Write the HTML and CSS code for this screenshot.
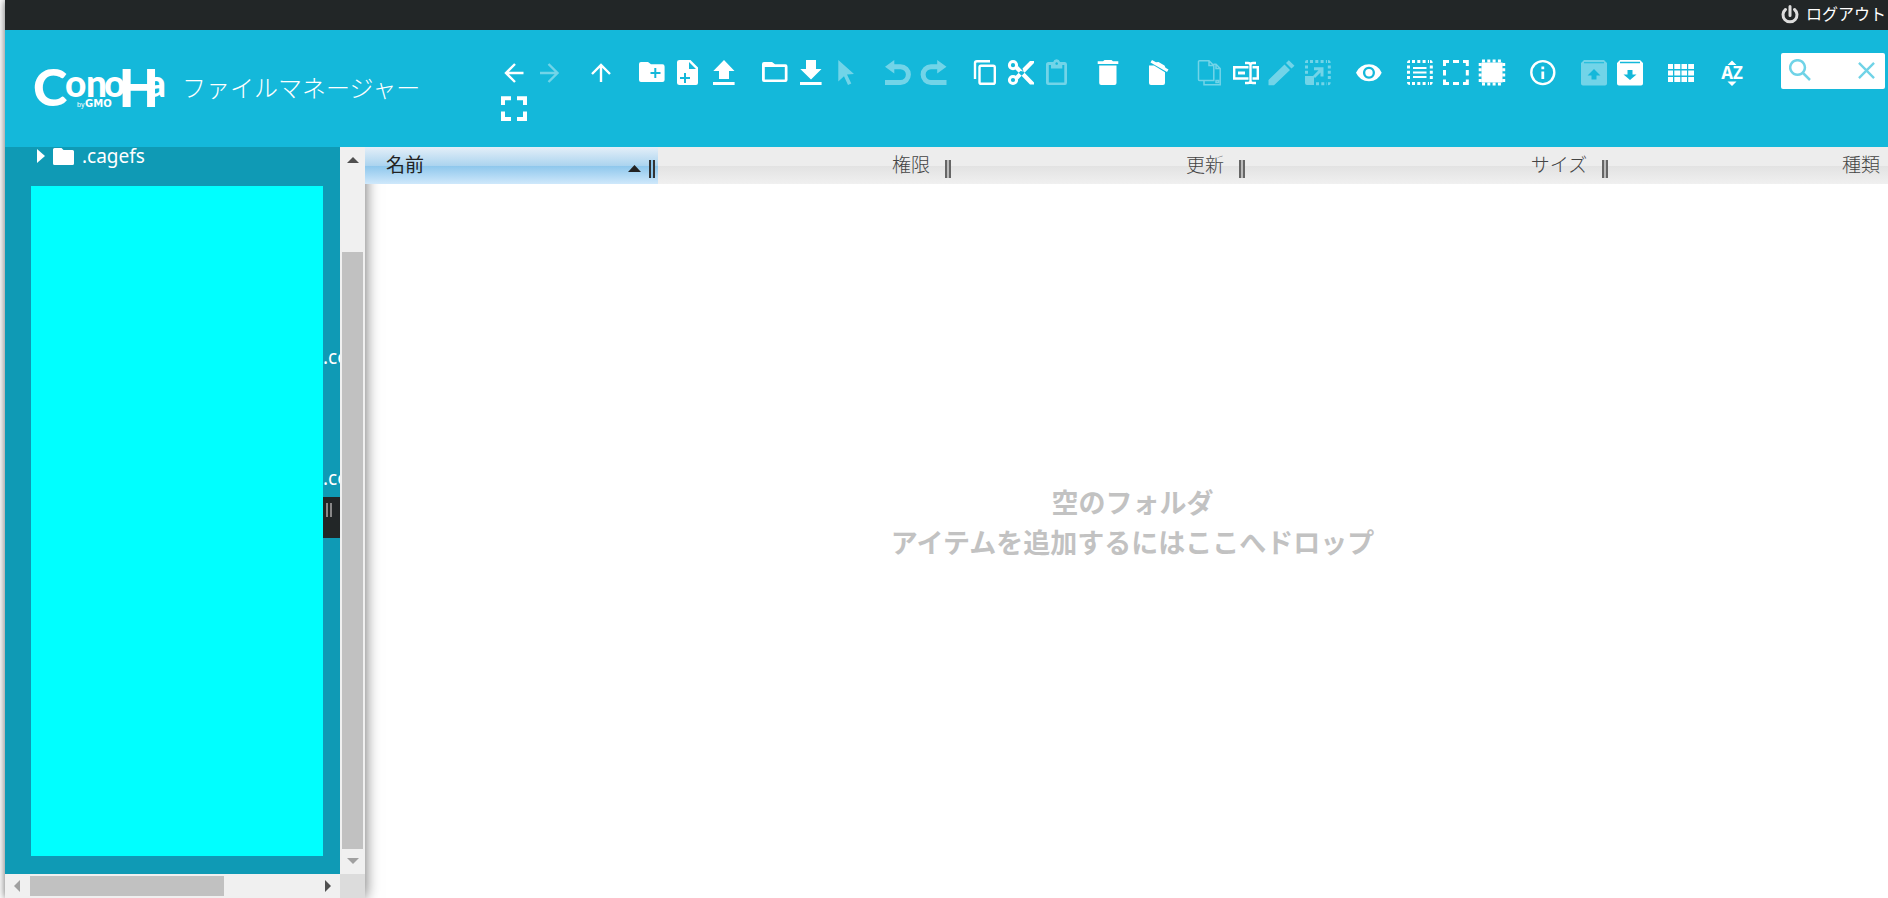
FILE: index.html
```
<!DOCTYPE html>
<html lang="ja">
<head>
<meta charset="utf-8">
<title>ConoHa ファイルマネージャー</title>
<link rel="stylesheet" href="styles.css">
</head>
<body>
<div class="app">
  <div class="topbar">
    <a class="logout" href="#logout">
      <svg class="power" viewBox="0 0 20 20" aria-hidden="true"><path d="M5.5 4.5a7 7 0 1 0 9 0M10 1.500v9"/></svg>
      <span>ログアウト</span>
    </a>
  </div>

  <header class="header">
    <h1 class="brand">
      <svg class="logo" viewBox="0 0 134 42" role="img" aria-label="ConoHa by GMO">
        <text y="38"><tspan class="logo-c" x="-2">C</tspan><tspan class="logo-s" y="29" x="30 51 69">ono</tspan><tspan class="logo-h" y="39" x="84">H</tspan><tspan class="logo-s" y="29" x="112">a</tspan></text>
        <text y="39"><tspan class="logo-by" x="42">by</tspan><tspan class="logo-gmo" x="50">GMO</tspan></text>
      </svg>
      <span class="brand-name">ファイルマネージャー</span>
    </h1>

    <div class="toolbar" role="toolbar" aria-label="ツールバー">
      <div class="group">
        <button class="tool" aria-label="戻る"><svg viewBox="0 0 26 26"><path class="l" d="M22.500 13H5M14 4L5 13L14 22"/></svg></button>
        <button class="tool" disabled aria-label="進む"><svg viewBox="0 0 26 26"><path class="l" d="M3 13H20.500M11.500 4L20.500 13L11.500 22"/></svg></button>
      </div>
      <div class="group">
        <button class="tool" aria-label="上へ"><svg viewBox="0 0 26 26"><path class="l" d="M13 22V5M4 14L13 5L22 14"/></svg></button>
      </div>
      <div class="group">
        <button class="tool" aria-label="新規フォルダ"><svg viewBox="0 0 26 26"><path fill-rule="evenodd" d="M2 2H9L12 4.200H23.500Q25.600 4.200 25.600 6.500V20Q25.600 22 23.500 22H2Q0 22 0 20V4Q0 2 2 2ZM15.300 8V12H11.500V14H15.300V18H17.300V14H21.500V12H17.300V8Z"/></svg></button>
        <button class="tool" aria-label="新規ファイル"><svg viewBox="0 0 26 26"><path fill-rule="evenodd" d="M4.500 0H15.500L23 7.500V23Q23 25 21 25H4.500Q2 25 2 23V2Q2 0 4.500 0ZM14 2V9H21ZM9 13V17H5V19H9V23H11V19H15V17H11V13Z"/></svg></button>
        <button class="tool" aria-label="アップロード"><svg viewBox="0 0 26 26"><path d="M13 0L23.500 11H18V19H8V11H2.300ZM2 22H23.600V25H2Z"/></svg></button>
      </div>
      <div class="group">
        <button class="tool" aria-label="開く"><svg viewBox="0 0 26 26"><path fill-rule="evenodd" d="M2 2H10L13 4.200H23.500Q25.500 4.200 25.500 6.500V20Q25.500 22 23.500 22H2Q0 22 0 20V4Q0 2 2 2ZM2.800 7V19.500H22.800V7Z"/></svg></button>
        <button class="tool" aria-label="ダウンロード"><svg viewBox="0 0 26 26"><path d="M8 0H18V9H23.500L13 19.500L2.300 9H8ZM2 22H23.600V25H2Z"/></svg></button>
        <button class="tool" disabled aria-label="選択項目を開く"><svg viewBox="0 0 26 26"><path d="M4.300 0L20 14L13 14.500L17.300 23.500L14 25L10 16.300L4.300 21.500Z"/></svg></button>
      </div>
      <div class="group">
        <button class="tool" disabled aria-label="元に戻す"><svg viewBox="0 0 26 26"><path d="M0 6.700L9.300 0V4.200H15.500a10.400 10.400 0 0 1 0 20.800H0V20H15.500a5.400 5.400 0 0 0 0-10.800H9.300V13.400Z"/></svg></button>
        <button class="tool" disabled aria-label="やり直し"><svg viewBox="0 0 26 26"><path d="M25.500 6.700L16.200 0V4.200H10a10.400 10.400 0 0 0 0 20.800H25.500V20H10a5.400 5.400 0 0 1 0-10.800H16.200V13.400Z"/></svg></button>
      </div>
      <div class="group">
        <button class="tool" aria-label="コピー"><svg viewBox="0 0 26 26"><path class="l" d="M3 19V3Q3 1.200 5 1.200H18M9 5.700H21.200Q22.800 5.700 22.800 7.500V22.200Q22.800 23.800 21.200 23.800H9Q7.500 23.800 7.500 22.200V7.500Q7.500 5.700 9 5.700Z"/></svg></button>
        <button class="tool" aria-label="切り取り"><svg viewBox="0 0 26 26"><circle class="l3" cx="5" cy="5.200" r="3.600"/><circle class="l3" cx="5" cy="20" r="3.600"/><path d="M7 9L10 6L26 22.500V24.500H22ZM7 16.500L10 19.500L26 3V1H22L14.500 8.500L15.500 11.500L12.500 11Z"/></svg></button>
        <button class="tool" disabled aria-label="貼り付け"><svg viewBox="0 0 26 26"><path fill-rule="evenodd" d="M4.500 2H9.200A3.500 3.500 0 0 1 16 2H21Q23 2 23 4.500V22.500Q23 25 21 25H4.500Q2 25 2 22.500V4.500Q2 2 4.500 2ZM4.800 5V22.500H20.300V5H18.300V8.500H7V5ZM12.600 2.200a1.300 1.300 0 1 0 .1 0Z"/></svg></button>
      </div>
      <div class="group">
        <button class="tool" aria-label="削除"><svg viewBox="0 0 26 26"><path d="M2.700 1.200H8L9.500 0H16.500L18 1.200H23.300V4H2.700ZM4.200 5.500H21.500V23Q21.500 25 19.500 25H6.200Q4.200 25 4.200 23Z"/></svg></button>
      </div>
      <div class="group">
        <button class="tool" aria-label="フォルダを空にする"><svg viewBox="0 0 26 26"><path d="M3 5.500H8L19 12.200V23Q19 25 17 25H5Q3 25 3 23ZM6 0L10 2.200L12.500 2L18.500 5.500L19.500 7.700L22.500 9.500L21 12L4.500 2.500Z"/></svg></button>
      </div>
      <div class="group">
        <button class="tool" disabled aria-label="複製"><svg viewBox="0 0 26 26"><path class="t" d="M2.500 .8H12L16.800 5.500V20.500H2.500Q1.500 20.500 1.500 19.500V1.800Q1.500 .8 2.500 .8ZM12 .8V5.500H16.800M7 20.500V24.700H23.200V8.500L19 4.200H16.500M19 4.200V8.500H23.200M19 20.500H21.500V22.500H19Z"/></svg></button>
        <button class="tool" aria-label="名前変更"><svg viewBox="0 0 26 26"><path class="l" d="M15.500 7.300H1.200V18.500H15.500M19.500 7.300H24.800V18.500H19.500M17.500 4V22M12 3H15Q17.500 3 17.500 5Q17.500 3 20 3H23M12 23H15Q17.500 23 17.500 21Q17.500 23 20 23H23"/><path d="M5 11.500H12V14.500H5Z"/></svg></button>
        <button class="tool" disabled aria-label="編集"><svg viewBox="0 0 26 26"><path d="M-.5 20L15.500 4.500L21 10L5 25.300H-.5ZM17 3L19.800 .3L25.500 5.700L22.500 8.500Z"/></svg></button>
        <button class="tool" disabled aria-label="サイズ変更"><svg viewBox="0 0 26 26"><path class="d" d="M5 1.500H22M1.500 5.500V15M24.300 5.500V20.500M11 23.700H22"/><path d="M0 2Q0 0 2 0H3V3H0ZM23 0Q25.700 0 25.700 3H23ZM23 22.200H25.700Q25.700 25.200 23 25.200ZM0 16H9V25H2Q0 25 0 23ZM9 7.200H18.500V16.500H15.500V12.500L10 18L8 16L13.500 10.200H9Z"/></svg></button>
      </div>
      <div class="group">
        <button class="tool" aria-label="プレビュー"><svg viewBox="0 0 26 26"><path fill-rule="evenodd" d="M13 4.200Q22 4.200 25.700 12.700Q22 21.200 13 21.200Q4 21.200 0 12.700Q4 4.200 13 4.200ZM12.900 6.700a6 6 0 1 0 .1 0Z"/><circle cx="13" cy="12.700" r="3.700"/></svg></button>
      </div>
      <div class="group">
        <button class="tool" aria-label="すべて選択"><svg viewBox="0 0 26 26"><path class="d" d="M5 1.500H22M5 23.500H22M1.500 5.500V20.500M24.300 5.500V20.500"/><path d="M0 3Q0 0 3 0V3ZM23 0Q25.700 0 25.700 3H23ZM0 22H3V25Q0 25 0 22ZM23 22H25.700Q25.700 25 23 25ZM6 7H19.500V9H6ZM6 11.500H19.500V13.500H6ZM6 16H19.500V18H6Z"/></svg></button>
        <button class="tool" aria-label="選択解除"><svg viewBox="0 0 26 26"><path class="l3" d="M1.500 6V1.500H6M10 1.500H16M20 1.500H24.300V6M24.300 10V15.500M24.300 19.500V23.500H20M16 23.500H10M6 23.500H1.500V19.500M1.500 15.500V10"/></svg></button>
        <button class="tool" aria-label="選択を反転"><svg viewBox="0 0 26 26"><path d="M2.500 2.500H23.500V22.500H2.500Z"/><path class="d" d="M3 1H24M3 24H24M1.200 3V24M24.700 3V24"/></svg></button>
      </div>
      <div class="group">
        <button class="tool" aria-label="情報"><svg viewBox="0 0 26 26"><circle class="l" cx="12.800" cy="12.600" r="11.500"/><path d="M11.400 6.500H14.200V9.200H11.400ZM11.400 11.500H14.200V19H11.400Z"/></svg></button>
      </div>
      <div class="group">
        <button class="tool" disabled aria-label="展開"><svg viewBox="0 0 26 26"><path fill-rule="evenodd" d="M3 0H23L26 3V23.500Q26 25.500 24 25.500H2Q0 25.500 0 23.500V3ZM3 2.200H23V3.200H3ZM13 9L6.500 15.500H10.500V19.500H15.500V15.500H19.500Z"/></svg></button>
        <button class="tool" aria-label="圧縮"><svg viewBox="0 0 26 26"><path fill-rule="evenodd" d="M3 0H23L26 3V23.500Q26 25.500 24 25.500H2Q0 25.500 0 23.500V3ZM3 1.700H23V3.200H3ZM13 20L6.500 14.500H10.500V10H15.500V14.500H19.500Z"/></svg></button>
      </div>
      <div class="group">
        <button class="tool" aria-label="表示切替"><svg viewBox="0 0 26 26"><path d="M0 4h5v5H0zM6.300 4h6v5h-6zM13.500 4h5.500v5h-5.500zM20.200 4H26v5h-5.800zM0 10.500h5v5H0zM6.300 10.500h6v5h-6zM13.500 10.500h5.500v5h-5.500zM20.200 10.500H26v5h-5.800zM0 17h5v5H0zM6.300 17h6v5h-6zM13.500 17h5.500v5h-5.500zM20.200 17H26v5h-5.800z"/></svg></button>
      </div>
      <div class="group">
        <button class="tool" aria-label="並べ替え"><svg viewBox="0 0 26 26"><path d="M13 .500L17.500 5H8.500ZM13 26L8.500 21.500H17.500Z"/><text class="az" x="13" y="19" text-anchor="middle">AZ</text></svg></button>
      </div>
      <div class="search">
        <svg class="magnifier" viewBox="0 0 22 22" aria-hidden="true"><path d="M14 14L21 21M8.500 1.200a7.300 7.300 0 1 0 .1 0Z"/></svg>
        <input class="search-input" type="text" aria-label="検索">
        <button class="clear" aria-label="クリア"><svg viewBox="0 0 18 18"><path d="M1 1L17 17M17 1L1 17"/></svg></button>
      </div>
      <div class="group">
        <button class="tool" aria-label="全画面"><svg viewBox="0 0 26 26"><path class="w4" d="M2 9V2.300H10M16 2.300H24V9M24 15.500V23H16M10 23H2V15.500"/></svg></button>
      </div>
    </div>
  </header>

  <div class="main">
    <nav class="side" aria-label="フォルダ">
      <div class="tree">
        <a class="node" href="#cagefs">
          <svg class="caret" viewBox="0 0 8 14" aria-hidden="true"><path d="M0 0L8 7L0 14Z"/></svg>
          <svg class="dir" viewBox="0 0 21 17" aria-hidden="true"><path d="M1.500 0H8.500L10.500 2H19.500Q21 2 21 3.500V15.500Q21 17 19.500 17H1.500Q0 17 0 15.500V1.500Q0 0 1.500 0Z"/></svg>
          <span>.cagefs</span>
        </a>
        <div class="masked">
          <div class="mask"></div>
          <div class="peek"><span>.co</span><span>.co</span></div>
        </div>
        <div class="handle" aria-hidden="true"></div>
      </div>
      <div class="vbar" aria-hidden="true">
        <svg class="v-arrow" viewBox="0 0 12 6"><path d="M6 0L12 6H0Z"/></svg>
        <div class="v-thumb"></div>
        <svg class="v-arrow dim" viewBox="0 0 12 6"><path d="M0 0H12L6 6Z"/></svg>
      </div>
      <div class="hbar" aria-hidden="true">
        <svg class="h-arrow dim" viewBox="0 0 6 12"><path d="M6 0V12L0 6Z"/></svg>
        <div class="h-track"><div class="h-thumb"></div></div>
        <svg class="h-arrow" viewBox="0 0 6 12"><path d="M0 0L6 6L0 12Z"/></svg>
      </div>
      <div class="corner"></div>
    </nav>

    <section class="files">
      <table class="columns">
        <thead>
          <tr>
            <th class="name" scope="col" aria-sort="ascending"><div class="cell"><span class="label">名前</span><svg class="sort" viewBox="0 0 13 7" aria-hidden="true"><path d="M6.500 0L13 7H0Z"/></svg><i class="grip"></i></div></th>
            <th class="perm" scope="col"><div class="cell"><span>権限</span><i class="grip"></i></div></th>
            <th class="date" scope="col"><div class="cell"><span>更新</span><i class="grip"></i></div></th>
            <th class="size" scope="col"><div class="cell"><span>サイズ</span><i class="grip"></i></div></th>
            <th class="kind" scope="col"><div class="cell"><span>種類</span></div></th>
          </tr>
        </thead>
      </table>
      <p class="empty">空のフォルダ<br>アイテムを追加するにはここへドロップ</p>
    </section>
  </div>
</div>
</body>
</html>
```
FILE: styles.css
```
* { box-sizing: border-box; }

body {
  margin: 0;
  background: #fff;
  font-family: "Noto Sans", "Noto Sans CJK JP", sans-serif;
  color: #222;
}

a { color: inherit; text-decoration: none; }

button {
  border: 0;
  padding: 0;
  background: none;
  color: inherit;
}

.app {
  display: flex;
  flex-direction: column;
  height: 100vh;
  margin-left: 5px;
  overflow: hidden;
  box-shadow: 0 0 8px rgba(0, 0, 0, .6);
}

.topbar {
  display: flex;
  flex: none;
  justify-content: flex-end;
  align-items: center;
  height: 30px;
  padding: 0 2px 4px 0;
  background: #222627;
  color: #fff;
}

.logout {
  display: flex;
  align-items: center;
  gap: 6px;
  font: 16px/24px "Noto Sans CJK JP", sans-serif;
}

.power {
  width: 20px;
  height: 20px;
  margin-top: 3px;
  fill: none;
  stroke: #ddd;
  stroke-width: 3;
  stroke-linecap: round;
}

.header {
  position: relative;
  z-index: 2;
  display: flex;
  flex: none;
  height: 117px;
  background: #14b8da;
  color: #fff;
}

.brand {
  display: flex;
  flex: none;
  align-items: flex-start;
  gap: 13px;
  width: 491px;
  margin: 0;
  padding: 38px 0 0 30px;
}

.logo { width: 134px; height: 42px; fill: #fff; overflow: visible; }
.logo-c { font: 900 52px Lato, sans-serif; }
.logo-s { font: 900 37px Lato, sans-serif; }
.logo-h { font: bold 55px "Liberation Sans Narrow", sans-serif; }
.logo-by { font: 7px "Liberation Sans", sans-serif; }
.logo-gmo { font: bold 10px "DejaVu Sans", sans-serif; }

.brand-name { font: 300 24px/38px "Noto Sans CJK JP", sans-serif; }

.toolbar {
  display: flex;
  flex: 1;
  flex-wrap: wrap;
  align-content: flex-start;
  column-gap: 15px;
  padding: 25px 3px 0 0;
}

.group { display: flex; }

.tool {
  display: flex;
  justify-content: center;
  align-items: center;
  width: 36px;
  height: 36px;
}

.tool:disabled { opacity: .4; }
.tool svg { width: 26px; height: 26px; fill: #fff; overflow: visible; }
.tool .l { fill: none; stroke: #fff; stroke-width: 2.400; }
.tool .l3 { fill: none; stroke: #fff; stroke-width: 3; }
.tool .w4 { fill: none; stroke: #fff; stroke-width: 4; }
.tool .t { fill: none; stroke: #fff; stroke-width: 1.500; }
.tool .d { fill: none; stroke: #fff; stroke-width: 3; stroke-dasharray: 3 2.300; }
.tool .az { font: bold 17px "Noto Sans", sans-serif; }

.search {
  display: flex;
  flex: 1 0 80px;
  align-items: center;
  height: 36px;
  margin: -2px 0 2px 16px;
  padding: 0 10px 2px 8px;
  border-radius: 2px;
  background: #fff;
}

.search svg { flex: none; fill: none; stroke: #70d3e7; stroke-width: 2.500; }
.magnifier { width: 22px; height: 22px; }
.search-input { flex: 1; width: 20px; min-width: 0; border: 0; padding: 0; background: none; font: 16px "Noto Sans", sans-serif; outline: 0; }
.clear { display: flex; }
.clear svg { width: 17px; height: 17px; }

.main { display: flex; flex: 1; min-height: 0; }

.side {
  position: relative;
  z-index: 1;
  display: grid;
  flex: none;
  grid-template: minmax(0, 1fr) 24px / 335px 25px;
  box-shadow: 0 0 14px rgba(0, 0, 0, .6);
}

.tree {
  position: relative;
  display: flex;
  flex-direction: column;
  padding-bottom: 18px;
  overflow: hidden;
  background: #0f9ab5;
  color: #fff;
  font-size: 19px;
}

.node {
  display: flex;
  align-items: center;
  height: 39px;
  padding: 0 0 21px 32px;
  line-height: 18px;
}

.caret { width: 8px; height: 14px; margin-right: 8px; fill: #fff; }
.dir { width: 21px; height: 17px; margin-right: 8px; fill: #fff; }

.masked {
  display: grid;
  flex: 1;
  grid-template-columns: 292px minmax(0, 1fr);
  padding-left: 26px;
}

.mask { background: #0ff; }

.peek {
  display: flex;
  flex-direction: column;
  gap: 81px;
  padding-top: 151px;
  overflow: hidden;
  line-height: 40px;
}

.handle {
  position: absolute;
  top: 350px;
  right: 0;
  width: 17px;
  height: 41px;
  padding: 6px 0 0 3px;
  background: #222627;
}

.handle::after {
  content: "";
  display: block;
  width: 2px;
  height: 14px;
  border: solid #888;
  border-width: 0 2px;
}

.vbar {
  display: flex;
  flex-direction: column;
  align-items: center;
  padding: 10px 2px;
  background: #f0f0f0;
}

.v-arrow { width: 12px; height: 6px; fill: #505050; }
.h-arrow { width: 6px; height: 12px; fill: #505050; }
.vbar .dim, .hbar .dim { fill: #a0a0a0; }
.v-thumb { flex: 1; width: 21px; margin: 89px 0 9px; background: #c1c1c1; }

.hbar {
  display: flex;
  align-items: center;
  gap: 10px;
  padding: 0 9px;
  background: #f0f0f0;
}

.h-track { flex: 1; }
.h-thumb { width: 68%; height: 20px; background: #c1c1c1; }
.corner { background: #dcdcdc; }

.files {
  display: flex;
  flex: 1;
  flex-direction: column;
  min-width: 0;
}

.columns {
  position: relative;
  z-index: 2;
  width: 100%;
  height: 37px;
  border-collapse: collapse;
  table-layout: fixed;
  background: linear-gradient(#ededed 0 50%, #e2e2e2 50%, #f0f0f0);
  color: #444;
  font: 19px/28px "Noto Sans CJK JP", sans-serif;
}

.columns th { padding: 0; font-weight: 300; vertical-align: top; }
.columns .name { width: 19.250%; background: linear-gradient(#e4eff8, #acd4ef 50%, #8cc6ec 50%, #cfe8fb); color: #222; font-weight: 400; }
.perm, .date { width: 19.300%; }
.size { width: 23.850%; }

.cell {
  display: flex;
  justify-content: flex-end;
  align-items: center;
  height: 37px;
  padding: 0 1px 4px 21px;
  gap: 15px;
}

.name .cell { gap: 8px; padding-right: 3px; }
.kind .cell { padding-right: 8px; }
.label { flex: 1; text-align: left; }
.sort { width: 13px; height: 7px; margin-top: 10px; fill: #222; }

.grip {
  width: 6px;
  height: 18px;
  margin-top: 11px;
  border: solid #666;
  border-width: 0 2px;
  background: #bbb;
}

.name .grip { border-color: #333; background: #8cc6ec; }

.empty {
  flex: 1;
  display: grid;
  align-content: center;
  margin: 0;
  padding: 0 0 38px 12px;
  color: #c2c2c2;
  text-align: center;
  font: bold 27px/40px "Noto Sans CJK JP", sans-serif;
}
```
